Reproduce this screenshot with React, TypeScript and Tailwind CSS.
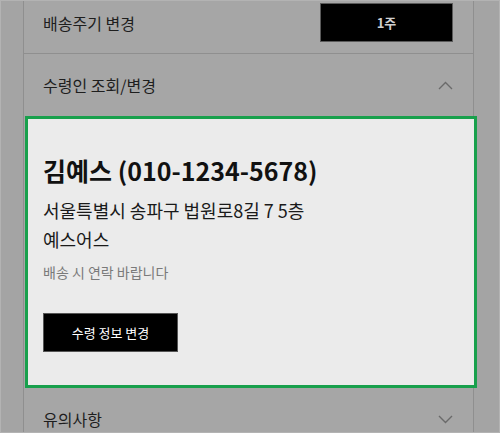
import React from 'react';

const font = { fontFamily: '"Noto Sans CJK KR", "Noto Sans", sans-serif' };

function Chevron({ up }: { up?: boolean }) {
  return (
    <svg width="15" height="9" viewBox="0 0 15 9" fill="none">
      <polyline
        points={up ? '1,8 7.5,1.5 14,8' : '1,1 7.5,7.5 14,1'}
        stroke="#6a6a6a"
        strokeWidth="1.4"
      />
    </svg>
  );
}

export default function App() {
  return (
    <div
      className="w-[500px] h-[433px] overflow-hidden bg-[#a4a4a4] border border-[#b3b3b3]"
      style={font}
    >
      <div className="ml-[22px] mt-[-9px] w-[451px] border-x border-[#8f8f8f] bg-[#a6a6a6]">
        {/* 배송주기 */}
        <div className="h-[62px] flex items-center justify-between pl-[19px] pr-[20px] border-b border-[#8f8f8f]">
          <span className="text-[16px] text-[#1e1e1e]">배송주기 변경</span>
          <button className="w-[133px] h-[39px] bg-black border border-[#5a5a5a] text-[13px] font-bold text-[#cfcfcf]">
            1주
          </button>
        </div>

        {/* 수령인 */}
        <div className="h-[62px] flex items-center justify-between pl-[19px] pr-[20px]">
          <span className="text-[16px] text-[#1e1e1e]">수령인 조회/변경</span>
          <Chevron up />
        </div>

        <div className="ml-[1px] w-[452px] h-[272px] border-[3px] border-[#18a04c] bg-[#ebebeb] pl-[15px] pt-[35px]">
          <div className="text-[25px] leading-[32px] font-bold text-[#111]">김예스 (010-1234-5678)</div>
          <div className="mt-[10px] text-[18px] leading-[29px] text-[#1a1a1a]">
            서울특별시 송파구 법원로8길 7 5층
            <br />
            예스어스
          </div>
          <div className="mt-[8px] text-[14px] leading-[20px] text-[#7a7a7a]">배송 시 연락 바랍니다</div>
          <button className="mt-[31px] w-[135px] h-[39px] bg-black border border-[#555] text-[13px] text-white">
            수령 정보 변경
          </button>
        </div>

        {/* 유의사항 */}
        <div className="h-[62px] flex items-center justify-between pl-[19px] pr-[20px]">
          <span className="text-[16px] text-[#1e1e1e]">유의사항</span>
          <Chevron />
        </div>
      </div>
    </div>
  );
}
